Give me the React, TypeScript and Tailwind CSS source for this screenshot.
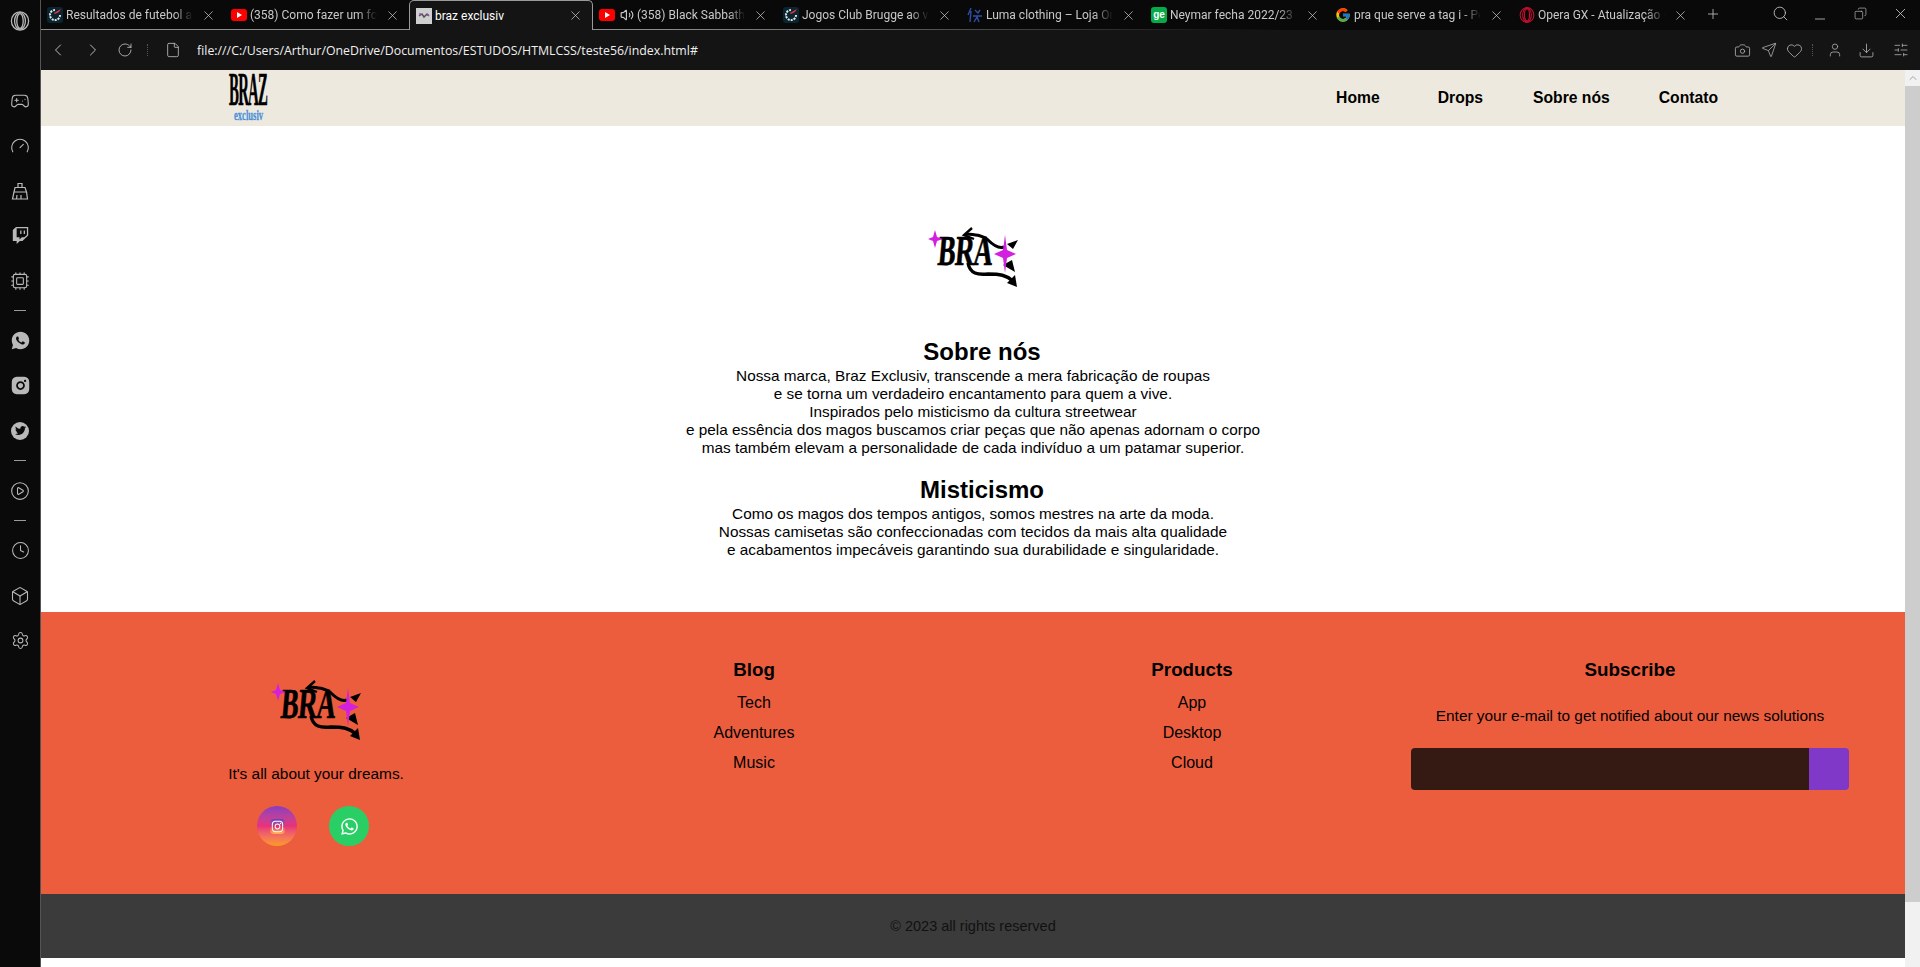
import React from 'react';
import {
  Gamepad2, Gauge, Cpu, CirclePlay, Clock, Box, Settings, X, Plus, Search, Minus, Copy,
  ChevronLeft, ChevronRight, RotateCw, File, Camera, Send, Heart, User, Download, SlidersHorizontal, Volume2, ChevronUp,
} from 'lucide-react';
import { FaTwitch, FaWhatsapp, FaInstagram, FaTwitter } from 'react-icons/fa';
import { RiWhatsappFill, RiInstagramFill } from 'react-icons/ri';
import { FcGoogle } from 'react-icons/fc';

const FONT = "font-['Liberation_Sans',Arial,sans-serif]";

// --- Favicons ---
const YoutubeIcon = () => (
  <span className="w-4 h-3 bg-[#f00] rounded-[3px] flex items-center justify-center">
    <svg width="6" height="6" viewBox="0 0 6 6"><path d="M1 0 L6 3 L1 6 Z" fill="#fff" /></svg>
  </span>
);

const ScoreIcon = () => (
  <span className="w-4 h-4 bg-[#0a2530] rounded-[3px] flex items-center justify-center">
    <svg width="14" height="14" viewBox="0 0 14 14">
      <path d="M7 2 A5 5 0 1 0 12 7" fill="none" stroke="#dfe7ea" strokeWidth="2" strokeDasharray="2 1" />
      <path d="M6 5 L13 1 L11 4 L7 6 Z" fill="#f0304a" />
    </svg>
  </span>
);

const BrazIcon = () => (
  <span className="w-4 h-4 bg-[#cfcfcf] flex items-center justify-center">
    <svg width="12" height="8" viewBox="0 0 12 8">
      <path d="M1 4 L4 2 L6 5 L9 2 L11 4" fill="none" stroke="#555" strokeWidth="1.5" />
      <circle cx="2" cy="2" r="1" fill="#b03fd0" />
      <circle cx="10" cy="3" r="1" fill="#b03fd0" />
    </svg>
  </span>
);

const LumaIcon = () => (
  <svg width="16" height="16" viewBox="0 0 16 16" fill="none" stroke="#2f4fa8" strokeWidth="1.4">
    <path d="M1 8 L4 1 M4 4 L3 15 M6 9 L15 9 M8 3 L11 6 L13 3 M7 15 L10 10 L12 15" />
  </svg>
);

const GeIcon = () => (
  <span className={`w-4 h-4 bg-[#06aa48] rounded-[3px] flex items-center justify-center text-white text-[10px] font-bold leading-none ${FONT}`}>ge</span>
);

// Opera's nested rings, used in the sidebar and on the GX tab
const OperaRings = ({ size, color }: { size: number; color: string }) => (
  <svg width={size} height={size} viewBox="0 0 20 20" fill="none" stroke={color} strokeWidth="1.3">
    <ellipse cx="10" cy="10" rx="8.6" ry="9.2" />
    <ellipse cx="10" cy="10" rx="5.4" ry="8.4" />
    <ellipse cx="10" cy="10" rx="3.2" ry="7.4" />
  </svg>
);

const tabs = [
  { title: 'Resultados de futebol ao vivo', icon: <ScoreIcon /> },
  { title: '(358) Como fazer um foco', icon: <YoutubeIcon /> },
  { title: 'braz exclusiv', icon: <BrazIcon />, active: true },
  { title: '(358) Black Sabbath - Iron', icon: <YoutubeIcon />, sound: true },
  { title: 'Jogos Club Brugge ao vivo', icon: <ScoreIcon /> },
  { title: 'Luma clothing – Loja Online', icon: <LumaIcon /> },
  { title: 'Neymar fecha 2022/23 com', icon: <GeIcon /> },
  { title: 'pra que serve a tag i - Pesquisa', icon: <FcGoogle size={16} /> },
  { title: 'Opera GX - Atualização de', icon: <OperaRings size={16} color="#c8102e" /> },
];

// --- Logo, the graffiti mark used in the hero and in the footer ---
const BraLogo = () => (
  <svg width="90" height="60" viewBox="0 0 90 60" className="block">
    <g transform="translate(9 38) skewX(-5) scale(0.88 1.42)">
      <text x="0" y="0" fontSize="30" fontWeight="700" letterSpacing="-0.5" fontFamily="'Liberation Serif', serif" fill="#000" stroke="#000" strokeWidth="0.5">BRA</text>
    </g>
    <path d="M38 7 C48 8 54 8 60 13 C65 18 70 22 76 20" fill="none" stroke="#000" strokeWidth="3" />
    <path d="M44 1 L36 8 L46 12" fill="none" stroke="#000" strokeWidth="2.4" />
    <path d="M40 36 C42 47 50 48 60 47 C72 47 78 48 85 54" fill="none" stroke="#000" strokeWidth="3.4" />
    <path d="M79 56 L89 60 L87 48 Z" fill="#000" />
    <path d="M79 17 L90 13 L85 22 Z M75 38 L84 33 L87 45 Z" fill="#000" />
    <path d="M7 3 L9 10 L15 12 L9 14 L7 21 L5 14 L0 12 L5 10 Z" fill="#d21fe0" />
    <path d="M77 8 L79 23 L88 27 L79 31 L77 46 L75 31 L66 27 L75 23 Z" fill="#d21fe0" />
  </svg>
);

const NavLogo = () => (
  <svg width="40" height="50" viewBox="0 0 40 50" className="block">
    <g transform="translate(1 32) scale(0.74 2.3)">
      <text x="0" y="0" fontSize="20" fontWeight="700" letterSpacing="-1" fontFamily="'Liberation Serif', serif" fill="#000" stroke="#000" strokeWidth="0.3">BRAZ</text>
    </g>
    <g transform="translate(6 47) scale(0.78 1.4)">
      <text x="0" y="0" fontSize="11" fontFamily="'Liberation Serif', serif" fill="#4a90d9" stroke="#4a90d9" strokeWidth="0.2">exclusiv</text>
    </g>
  </svg>
);

const BroomIcon = ({ className }: { className: string }) => (
  <svg width="20" height="20" viewBox="0 0 20 20" fill="none" stroke="currentColor" strokeWidth="1.2" className={className}>
    <path d="M8 6 L8 2.5 L12 2.5 L12 6" />
    <path d="M5 6.5 L15 6.5 L16.5 11 L4 11 Z" />
    <path d="M4 11 L2.5 18 L17.5 18 L16.5 11 M7 14 L6.5 18 M11 14 L11 18" />
  </svg>
);

// --- Browser chrome ---
const Sidebar = () => {
  const cls = 'text-[#b9b9b9]';
  const items = [
    <Gamepad2 size={20} strokeWidth={1.3} className={cls} />,
    <Gauge size={20} strokeWidth={1.3} className={cls} />,
    <BroomIcon className={cls} />,
    <FaTwitch size={17} className={cls} />,
    <Cpu size={20} strokeWidth={1.3} className={cls} />,
  ];
  const social = [
    <RiWhatsappFill size={21} className={cls} />,
    <RiInstagramFill size={21} className={cls} />,
    <span className="w-[18px] h-[18px] rounded-full bg-[#b9b9b9] flex items-center justify-center">
      <FaTwitter size={11} color="#0a0a0a" />
    </span>,
  ];
  const last = [
    <Clock size={19} strokeWidth={1.3} className={cls} />,
    <Box size={20} strokeWidth={1.3} className={cls} />,
    <Settings size={19} strokeWidth={1.3} className={cls} />,
  ];
  const Cell = ({ children }: { children: React.ReactNode }) => (
    <div className="h-[45px] flex items-center justify-center">{children}</div>
  );
  const Sep = () => <div className="w-3 h-px bg-[#9a9a9a] my-[7px]" />;
  return (
    <aside className="w-[41px] flex-shrink-0 h-full bg-[#0a0a0a] border-r border-[#555] flex flex-col items-center">
      <div className="h-[78px] w-full pt-[11px] flex justify-center items-start">
        <OperaRings size={20} color="#b9b9b9" />
      </div>
      {items.map((icon, i) => <Cell key={i}>{icon}</Cell>)}
      <Sep />
      {social.map((icon, i) => <Cell key={i}>{icon}</Cell>)}
      <Sep />
      <Cell><CirclePlay size={20} strokeWidth={1.3} className={cls} /></Cell>
      <Sep />
      {last.map((icon, i) => <Cell key={i}>{icon}</Cell>)}
    </aside>
  );
};

const TabBar = () => (
  <div className="h-[30px] bg-[#090909] relative flex items-stretch flex-shrink-0">
    <div className="absolute left-0 bottom-0 h-px w-[1240px] bg-gradient-to-r from-[#8d8d8d] via-[#8d8d8d] to-transparent" />
    {tabs.map((tab) => (
      <div
        key={tab.title}
        className={`w-[184px] flex-shrink-0 relative flex items-center pl-[6px] pr-[9px] ${tab.active ? 'bg-[#141414] border border-b-0 border-[#9a9a9a] rounded-t-[5px] z-10 text-white' : 'text-[#c8c8c8]'}`}
      >
        <span className="w-4 h-4 flex items-center justify-center flex-shrink-0">{tab.icon}</span>
        {tab.sound && <Volume2 size={14} className="ml-[5px] flex-shrink-0 text-[#c8c8c8]" />}
        <span className={`ml-[3px] flex-1 overflow-hidden whitespace-nowrap text-[12px] font-['Roboto',sans-serif] ${tab.active ? '' : '[mask-image:linear-gradient(to_right,black_85%,transparent)]'}`}>
          {tab.title}
        </span>
        <X size={15} strokeWidth={1.2} className="ml-2 flex-shrink-0 text-[#c8c8c8]" />
      </div>
    ))}
    <Plus size={16} strokeWidth={1.2} className="ml-2 mt-[6px] text-[#c8c8c8]" />
    <div className="ml-auto flex items-center text-[#c8c8c8] pb-1">
      <span className="w-10 flex justify-center"><Search size={17} strokeWidth={1.2} /></span>
      <span className="w-10 flex justify-center pt-3"><Minus size={16} strokeWidth={1.2} /></span>
      <span className="w-10 flex justify-center"><Copy size={13} strokeWidth={1.2} className="-scale-x-100" /></span>
      <span className="w-10 flex justify-center"><X size={17} strokeWidth={1.2} /></span>
    </div>
  </div>
);

const Toolbar = () => {
  const Dots = () => <div className="w-px h-3 border-l border-dotted border-[#555]" />;
  return (
    <div className="h-[40px] bg-[#141414] flex items-center flex-shrink-0 text-[#c8c8c8]">
      <ChevronLeft size={20} strokeWidth={1.1} className="ml-[7px]" />
      <ChevronRight size={20} strokeWidth={1.1} className="ml-[15px]" />
      <RotateCw size={16} strokeWidth={1.2} className="ml-[14px]" />
      <div className="ml-[14px]"><Dots /></div>
      <File size={16} strokeWidth={1.2} className="ml-[17px]" />
      <span className="ml-4 pt-[2px] text-[12.35px] text-[#f0f0f0] font-['Open_Sans',sans-serif] whitespace-nowrap">file:///C:/Users/Arthur/OneDrive/Documentos/ESTUDOS/HTMLCSS/teste56/index.html#</span>
      <div className="ml-auto flex items-center text-[#b0b0b0]">
        <Camera size={17} strokeWidth={1.2} />
        <Send size={16} strokeWidth={1.2} className="ml-[10px]" />
        <Heart size={17} strokeWidth={1.2} className="ml-[9px]" />
        <div className="ml-[9px]"><Dots /></div>
        <User size={16} strokeWidth={1.2} className="ml-[14px]" />
        <Download size={17} strokeWidth={1.2} className="ml-[15px]" />
        <SlidersHorizontal size={16} strokeWidth={1.2} className="ml-[18px] mr-[11px]" />
      </div>
    </div>
  );
};

const Scrollbar = () => (
  <div className="w-[15px] flex-shrink-0 bg-[#f1f1f1] flex flex-col">
    <div className="h-4 flex items-center justify-center"><ChevronUp size={12} className="text-[#a3a3a3]" /></div>
    <div className="h-[816px] bg-[#cdcdcd]" />
  </div>
);

// --- Page ---
const Header = () => (
  <header className={`h-[56px] bg-[#eee9df] flex items-center text-black font-bold text-[15.7px] flex-shrink-0 ${FONT}`}>
    <div className="ml-[187px]"><NavLogo /></div>
    <nav className="ml-auto flex mr-[187px]">
      <a className="mr-[58px]" href="#">Home</a>
      <a className="mr-[50px]" href="#">Drops</a>
      <a className="mr-[49px]" href="#">Sobre nós</a>
      <a href="#">Contato</a>
    </nav>
  </header>
);

const About = () => (
  <main className={`h-[486px] bg-white flex flex-col items-center pt-[101px] text-black flex-shrink-0 ${FONT}`}>
    <BraLogo />
    <div className="text-center text-[15.35px] leading-[18px]">
      <h2 className="mt-[51px] pl-[18px] text-2xl leading-7 font-bold">Sobre nós</h2>
      <p className="mt-px">
        Nossa marca, Braz Exclusiv, transcende a mera fabricação de roupas<br />
        e se torna um verdadeiro encantamento para quem a vive.<br />
        Inspirados pelo misticismo da cultura streetwear<br />
        e pela essência dos magos buscamos criar peças que não apenas adornam o corpo<br />
        mas também elevam a personalidade de cada indivíduo a um patamar superior.
      </p>
      <h2 className="mt-[19px] pl-[18px] text-2xl leading-7 font-bold">Misticismo</h2>
      <p className="mt-px">
        Como os magos dos tempos antigos, somos mestres na arte da moda.<br />
        Nossas camisetas são confeccionadas com tecidos da mais alta qualidade<br />
        e acabamentos impecáveis garantindo sua durabilidade e singularidade.
      </p>
    </div>
  </main>
);

const LinkColumn = ({ title, links }: { title: string; links: string[] }) => (
  <div className="flex flex-col items-center">
    <h3 className="text-[18.8px] leading-6 font-bold">{title}</h3>
    <ul className="text-center text-base mt-[6px]">
      {links.map((link) => (
        <li key={link} className="h-[30px] leading-[30px]">{link}</li>
      ))}
    </ul>
  </div>
);

const Footer = () => (
  <footer className={`h-[282px] bg-[#ec5d3e] text-black grid grid-cols-4 px-[56px] pt-[46px] flex-shrink-0 ${FONT}`}>
    <div className="flex flex-col items-center">
      <div className="mt-[22px]"><BraLogo /></div>
      <p className="mt-[25px] text-[15.4px] leading-[18px]">It's all about your dreams.</p>
      <div className="flex gap-8 mt-[23px] -ml-[6px]">
        <span className="w-10 h-10 rounded-full bg-gradient-to-b from-[#8a3ac0] via-[#e8307a] to-[#fc9a16] flex items-center justify-center">
          <span className="w-[15px] h-[15px] rounded-[4px] bg-gradient-to-b from-[#5b3fd0] via-[#e03070] to-[#ffb340] flex items-center justify-center">
            <FaInstagram size={13} color="#fff" />
          </span>
        </span>
        <span className="w-10 h-10 rounded-full bg-[#29cf65] flex items-center justify-center">
          <FaWhatsapp size={19} color="#fff" />
        </span>
      </div>
    </div>
    <LinkColumn title="Blog" links={['Tech', 'Adventures', 'Music']} />
    <LinkColumn title="Products" links={['App', 'Desktop', 'Cloud']} />
    <div className="flex flex-col items-center">
      <h3 className="text-[18.8px] leading-6 font-bold">Subscribe</h3>
      <p className="mt-[25px] text-[15.4px] leading-[18px]">Enter your e-mail to get notified about our news solutions</p>
      <form className="mt-[23px] w-full h-[42px] flex rounded overflow-hidden">
        <input className="flex-1 min-w-0 bg-[#351a13] outline-none" />
        <button type="button" className="w-10 bg-[#7f38c8]" />
      </form>
    </div>
  </footer>
);

const Copyright = () => (
  <div className={`h-[64px] bg-[#3b3b3b] flex items-center justify-center pt-[2px] text-[14.5px] text-[#111] flex-shrink-0 ${FONT}`}>
    © 2023 all rights reserved
  </div>
);

const App: React.FC = () => (
  <div className="h-[967px] w-full flex overflow-hidden bg-white">
    <Sidebar />
    <div className="flex-1 min-w-0 flex flex-col">
      <TabBar />
      <Toolbar />
      <div className="flex-1 min-h-0 flex">
        <div className="flex-1 min-w-0 flex flex-col">
          <Header />
          <About />
          <Footer />
          <Copyright />
        </div>
        <Scrollbar />
      </div>
    </div>
  </div>
);

export default App;
